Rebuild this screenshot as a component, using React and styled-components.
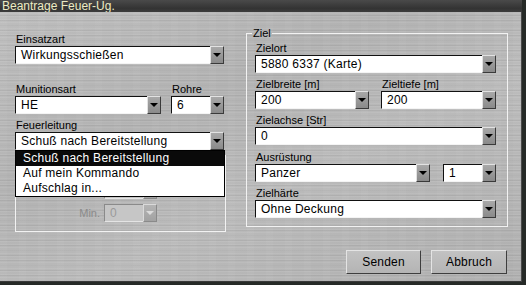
import styled, { createGlobalStyle } from "styled-components";

const GlobalStyle = createGlobalStyle`
  html, body {
    margin: 0;
    background: #262a27;
  }
  body {
    font-family: "Liberation Sans", Arial, sans-serif;
    color: #000;
  }
`;

const metal = `
  repeating-linear-gradient(0deg, rgba(255,255,255,0.07) 0 1px, transparent 1px 3px),
  repeating-linear-gradient(0deg, rgba(0,0,0,0.05) 0 1px, transparent 1px 5px),
  repeating-linear-gradient(90deg, rgba(255,255,255,0.03) 0 7px, transparent 7px 19px),
  linear-gradient(155deg, #bdbdbd 0%, #b2b2b2 35%, #bababa 60%, #afafaf 100%)
`;

const Window = styled.div`
  width: 522px;
  height: 282px;
  display: flex;
  flex-direction: column;
`;

const TitleBar = styled.div`
  height: 12px;
  line-height: 12px;
  padding-left: 2px;
  font-size: 12px;
  color: #ecebc4;
  background: linear-gradient(#4a4a4a, #333 70%, #3c3c3c);
  white-space: nowrap;
`;

const Body = styled.div`
  flex: 1;
  box-sizing: border-box;
  background: ${metal};
  border-right: 1px solid #4a4a4a;
  border-bottom: 1px solid #3a3a3a;
  padding: 21px 13px 0 15px;
  display: grid;
  grid-template-columns: 211px 262px;
  grid-template-rows: auto auto;
  column-gap: 20px;
  row-gap: 10px;
  align-items: start;
`;

const LeftColumn = styled.div`
  display: flex;
  flex-direction: column;
`;

const FieldGroup = styled.div`
  display: flex;
  flex-direction: column;
  margin-top: ${(p) => p.$top || 0}px;
`;

const Label = styled.div`
  font-size: 11px;
  line-height: 13px;
  height: 13px;
  padding-left: 1px;
  white-space: nowrap;
`;

const Row = styled.div`
  display: flex;
  gap: ${(p) => p.$gap}px;
  margin-top: ${(p) => p.$top || 0}px;
`;

const ComboBox = styled.div`
  position: relative;
  display: flex;
  width: ${(p) => p.$width}px;
  height: 18px;
`;

const Field = styled.div`
  flex: 1;
  box-sizing: border-box;
  height: 18px;
  background: ${(p) => (p.$disabled ? "#c6c6c6" : "#fff")};
  color: ${(p) => (p.$disabled ? "#9a9a9a" : "#000")};
  border-top: 1px solid ${(p) => (p.$disabled ? "#8a8a8a" : "#111")};
  border-left: 1px solid ${(p) => (p.$disabled ? "#8a8a8a" : "#111")};
  border-bottom: 1px solid ${(p) => (p.$disabled ? "#e4e4e4" : "#f4f4f4")};
  font-size: 12px;
  letter-spacing: 0.25px;
  line-height: 16px;
  padding-left: 5px;
  white-space: nowrap;
  overflow: hidden;
`;

const Arrow = styled.div`
  width: 14px;
  height: 18px;
  box-sizing: border-box;
  display: flex;
  align-items: center;
  justify-content: center;
  background: ${(p) =>
    p.$disabled
      ? "linear-gradient(#b4b4b4, #a2a2a2)"
      : "linear-gradient(#a8a8a8, #8a8a8a)"};
  border: 1px solid;
  border-color: ${(p) =>
    p.$disabled ? "#dadada #8a8a8a #8a8a8a #dadada" : "#e2e2e2 #3a3a3a #3a3a3a #e2e2e2"};
  svg {
    display: block;
    fill: ${(p) => (p.$disabled ? "#dcdcdc" : "#000")};
  }
`;

const DropList = styled.div`
  position: absolute;
  top: 18px;
  left: 0;
  width: 210px;
  box-sizing: border-box;
  background: #fff;
  border: 1px solid #000;
  z-index: 5;
`;

const DropItem = styled.div`
  height: 15px;
  line-height: 15px;
  font-size: 12px;
  letter-spacing: 0.25px;
  padding-left: 7px;
  white-space: nowrap;
  background: ${(p) => (p.$active ? "#0a0a0a" : "transparent")};
  color: ${(p) => (p.$active ? "#fff" : "#000")};
`;

const Frame = styled.div`
  margin-top: 5px;
  box-sizing: border-box;
  border: 1px solid #f2f2f2;
  padding: 25px 0 9px 0;
  display: flex;
  flex-direction: column;
  gap: 5px;
`;

const TimeRow = styled.div`
  display: flex;
  align-items: center;
  gap: 4px;
`;

const TimeLabel = styled.div`
  width: 84px;
  text-align: right;
  font-size: 11px;
  color: #8a8a8a;
`;

const Group = styled.fieldset`
  margin: -6px 0 0 0;
  padding: 2px 11px 8px 8px;
  border: 1px solid #f2f2f2;
  display: flex;
  flex-direction: column;
  gap: 5px;
  min-width: 0;
`;

const Legend = styled.legend`
  font-size: 11px;
  line-height: 13px;
  padding: 0 1px;
  margin-left: -3px;
`;

const ButtonRow = styled.div`
  grid-column: 2;
  display: flex;
  justify-content: flex-end;
  gap: 10px;
  padding-right: 1px;
`;

const Button = styled.button`
  width: ${(p) => p.$width}px;
  height: 24px;
  box-sizing: border-box;
  font-family: inherit;
  font-size: 12px;
  letter-spacing: 0.2px;
  color: #000;
  background: linear-gradient(#c2c2c2, #b4b4b4);
  border: 1px solid;
  border-color: #e4e4e4 #3e3e3e #3e3e3e #e4e4e4;
  padding: 0;
`;

const Triangle = () => (
  <svg width="8" height="4" viewBox="0 0 8 4">
    <path d="M0 0h8L4 4z" />
  </svg>
);

const Combo = ({ value, width, disabled, children }) => (
  <ComboBox $width={width}>
    <Field $disabled={disabled}>{value}</Field>
    <Arrow $disabled={disabled}>
      <Triangle />
    </Arrow>
    {children}
  </ComboBox>
);

const fireOptions = ["Schuß nach Bereitstellung", "Auf mein Kommando", "Aufschlag in..."];

export default function App() {
  return (
    <>
      <GlobalStyle />
      <Window>
        <TitleBar>Beantrage Feuer-Ug.</TitleBar>
        <Body>
          <LeftColumn>
            <FieldGroup>
              <Label>Einsatzart</Label>
              <Combo value="Wirkungsschießen" width={209} />
            </FieldGroup>
            <Row $gap={10} $top={19}>
              <FieldGroup>
                <Label>Munitionsart</Label>
                <Combo value="HE" width={146} />
              </FieldGroup>
              <FieldGroup>
                <Label>Rohre</Label>
                <Combo value="6" width={53} />
              </FieldGroup>
            </Row>
            <FieldGroup $top={5}>
              <Label>Feuerleitung</Label>
              <Combo value="Schuß nach Bereitstellung" width={209}>
                <DropList>
                  {fireOptions.map((o, i) => (
                    <DropItem key={o} $active={i === 0}>
                      {o}
                    </DropItem>
                  ))}
                </DropList>
              </Combo>
            </FieldGroup>
            <Frame>
              {/* this row sits under the open list */}
              <TimeRow>
                <TimeLabel />
                <Combo value="" width={53} disabled />
              </TimeRow>
              <TimeRow>
                <TimeLabel>Min.</TimeLabel>
                <Combo value="0" width={53} disabled />
              </TimeRow>
            </Frame>
          </LeftColumn>

          <Group>
            <Legend>Ziel</Legend>
            <FieldGroup>
              <Label>Zielort</Label>
              <Combo value="5880 6337 (Karte)" width={241} />
            </FieldGroup>
            <Row $gap={12}>
              <FieldGroup>
                <Label>Zielbreite [m]</Label>
                <Combo value="200" width={114} />
              </FieldGroup>
              <FieldGroup>
                <Label>Zieltiefe [m]</Label>
                <Combo value="200" width={115} />
              </FieldGroup>
            </Row>
            <FieldGroup>
              <Label>Zielachse [Str]</Label>
              <Combo value="0" width={241} />
            </FieldGroup>
            <FieldGroup $top={1}>
              <Label>Ausrüstung</Label>
              <Row $gap={13}>
                <Combo value="Panzer" width={175} />
                <Combo value="1" width={53} />
              </Row>
            </FieldGroup>
            <FieldGroup>
              <Label>Zielhärte</Label>
              <Combo value="Ohne Deckung" width={241} />
            </FieldGroup>
          </Group>

          <ButtonRow>
            <Button $width={75}>Senden</Button>
            <Button $width={76}>Abbruch</Button>
          </ButtonRow>
        </Body>
      </Window>
    </>
  );
}
